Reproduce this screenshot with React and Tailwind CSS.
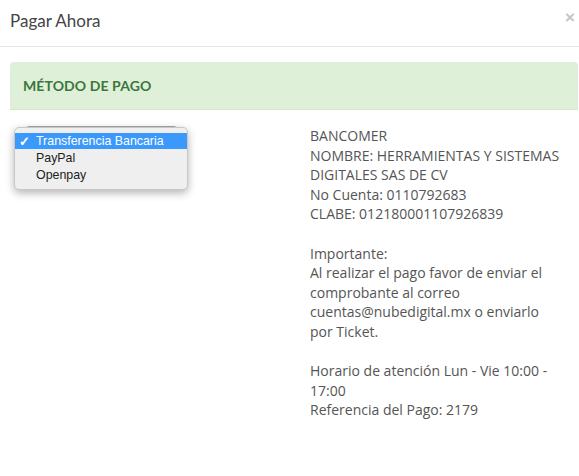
import React from 'react';

const bankLines = [
  'BANCOMER',
  'NOMBRE: HERRAMIENTAS Y SISTEMAS DIGITALES SAS DE CV',
  'No Cuenta: 0110792683',
  'CLABE: 012180001107926839',
];

const PaymentModal = () => {
  return (
    <div className="w-[579px] h-[476px] bg-white overflow-hidden" style={{ fontFamily: '"Open Sans", sans-serif' }}>
      {/* header */}
      <div className="h-[47px] border-b border-[#e5e5e5] flex items-center justify-between pl-[10px] pr-[4px]">
        <h4 className="text-[17px] text-[#444] font-normal -mt-[4px]" style={{ fontFamily: 'Lato, sans-serif' }}>
          Pagar Ahora
        </h4>
        <span className="text-[17px] font-bold text-[#c4c4c4] -mt-[12px] leading-none" style={{ fontFamily: '"Liberation Sans", sans-serif' }}>
          ×
        </span>
      </div>

      {/* body */}
      <div className="pt-[15px] pl-[10px] pr-[1px]">
        <div className="h-[48px] bg-[#dff0d8] border-b border-[#d0e9c6] rounded-tl-[4px] rounded-tr-[4px] flex items-center px-[13px]">
          <h3 className="text-[14px] font-bold text-[#3c763d] tracking-[0.1px]" style={{ fontFamily: 'Lato, sans-serif' }}>
            MÉTODO DE PAGO
          </h3>
        </div>

        <div className="flex pt-[15px]">
          {/* left column: select with opened menu */}
          <div className="w-[300px] relative">
            <div className="ml-[15px] mt-[1px] w-[153px] h-[22px] border border-[#a6a6a6] rounded-[4px] bg-[#f7f7f7]" />
            <div
              className="absolute left-[4px] top-[2px] w-[174px] py-[5px] bg-[#efefef] rounded-[5px] border border-[#c8c8c8] shadow-[0_3px_8px_rgba(0,0,0,0.3)] text-[12.4px] text-[#222]"
              style={{ fontFamily: '"Liberation Sans", sans-serif' }}
            >
              <div className="h-[16px] bg-[#3b99fc] text-white flex items-center leading-none">
                <span className="w-[21px] pl-[4px] text-[13px] font-bold">✓</span>
                <span>Transferencia Bancaria</span>
              </div>
              <div className="h-[18px] flex items-center pl-[21px] leading-none">PayPal</div>
              <div className="h-[17px] flex items-center pl-[21px] leading-none">Openpay</div>
            </div>
          </div>

          {/* right column: bank info */}
          <div className="w-[252px] text-[14px] leading-[19.6px] text-[#555] pt-[1px]">
            {bankLines.map((line) => (
              <p key={line}>{line}</p>
            ))}
            <p className="mt-[19.6px]">Importante:</p>
            <p>
              Al realizar el pago favor de enviar el comprobante al correo cuentas@nubedigital.mx o enviarlo por
              Ticket.
            </p>
            <p className="mt-[19.6px]">Horario de atención Lun - Vie 10:00 - 17:00</p>
            <p>Referencia del Pago: 2179</p>
          </div>
        </div>
      </div>
    </div>
  );
};

export default function App() {
  return <PaymentModal />;
}
